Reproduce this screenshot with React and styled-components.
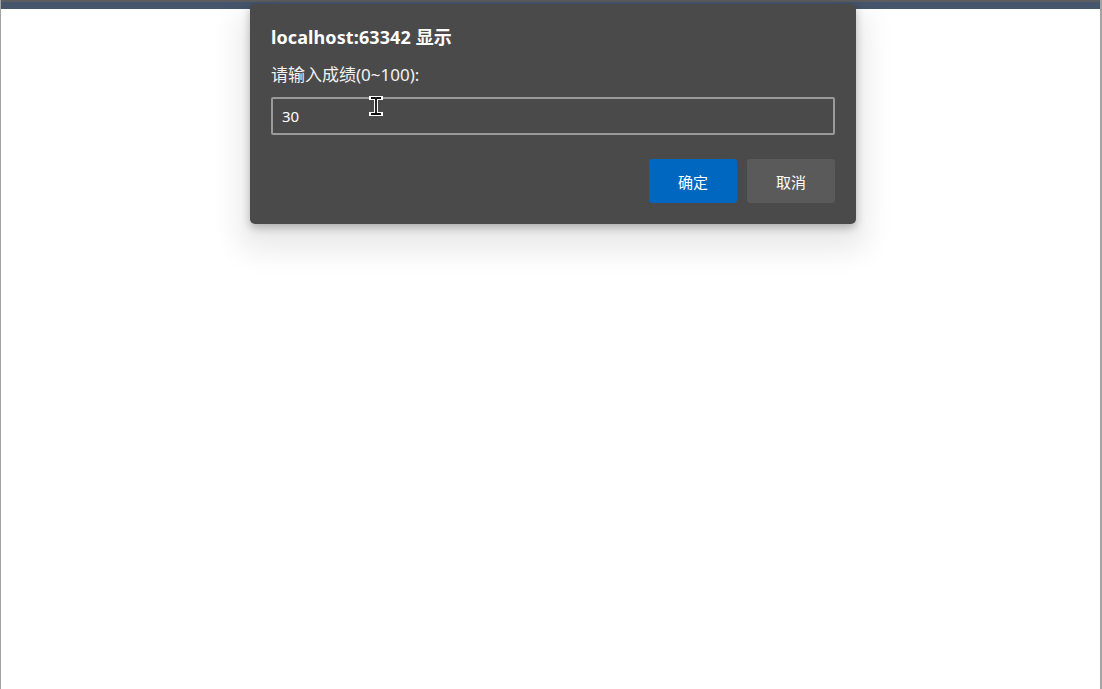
import styled, { createGlobalStyle } from 'styled-components'

const GlobalStyle = createGlobalStyle`
    html, body {
        margin: 0;
        padding: 0;
        background: #ffffff;
    }
    body {
        font-family: "Noto Sans", "Noto Sans CJK SC", sans-serif;
    }
`

const PromptDialog = () => {
    return (
        <Dialog>
            <Title>localhost:63342 显示</Title>
            <Label>请输入成绩(0~100):</Label>
            <InputWrap>
                <Input defaultValue="30" />
                <Cursor width="14" height="20" viewBox="0 0 14 20">
                    <path d="M2 2h4l1 1 1-1h4M7 3v14M2 18h4l1-1 1 1h4" fill="none" stroke="#ffffff" strokeWidth="4" strokeLinecap="square" />
                    <path d="M2 2h4l1 1 1-1h4M7 3v14M2 18h4l1-1 1 1h4" fill="none" stroke="#111111" strokeWidth="1.8" />
                </Cursor>
            </InputWrap>
            <Buttons>
                <Button primary>确定</Button>
                <Button>取消</Button>
            </Buttons>
        </Dialog>
    )
}

const App = () => {
    return (
        <>
            <GlobalStyle />
            <Window>
                <TopBar />
                <Page>
                    <PromptDialog />
                </Page>
            </Window>
        </>
    )
}

const Window = styled.div`
    position: relative;
    height: 689px;
    box-sizing: border-box;
    border-left: 1px solid #a3a3a3;
    border-right: 2px solid #a3a3a3;
    display: flex;
    flex-direction: column;
    overflow: hidden;
`

const TopBar = styled.div`
    height: 7px;
    background: #45556b;
    border-top: 2px solid #5b5d60;
`

const Page = styled.div`
    flex: 1;
    background: #ffffff;
`

const Dialog = styled.div`
    position: absolute;
    top: 4px;
    left: 249px;
    width: 606px;
    box-sizing: border-box;
    padding: 21px 21px 21px 21px;
    background: #4a4a4a;
    border-radius: 5px;
    color: #ffffff;
    box-shadow: 0 4px 8px rgba(0, 0, 0, 0.25), 0 16px 30px 10px rgba(0, 0, 0, 0.09);
`

const Title = styled.div`
    font-size: 18px;
    font-weight: 700;
    line-height: 24px;
    letter-spacing: 0.1px;
`

const Label = styled.div`
    margin-top: 15px;
    font-size: 17px;
    line-height: 22px;
    color: #f2f2f2;
`

const InputWrap = styled.div`
    position: relative;
    margin-top: 11px;
`

const Input = styled.input`
    display: block;
    width: 100%;
    height: 38px;
    box-sizing: border-box;
    padding: 0 9px;
    background: #4a4a4a;
    border: 2px solid #9a9a9a;
    border-radius: 2px;
    color: #ffffff;
    font-family: "Noto Sans", "Noto Sans CJK SC", sans-serif;
    font-size: 15px;
    outline: none;
`

const Cursor = styled.svg`
    position: absolute;
    left: 98px;
    top: -1px;
`

const Buttons = styled.div`
    display: flex;
    justify-content: flex-end;
    gap: 10px;
    margin-top: 24px;
`

const Button = styled.button`
    width: 88px;
    height: 44px;
    border: none;
    border-radius: 3px;
    background: ${props => props.primary ? '#0067c0' : '#5a5a5a'};
    color: #ffffff;
    font-family: "Noto Sans", "Noto Sans CJK SC", sans-serif;
    font-size: 15px;
`

export default App
